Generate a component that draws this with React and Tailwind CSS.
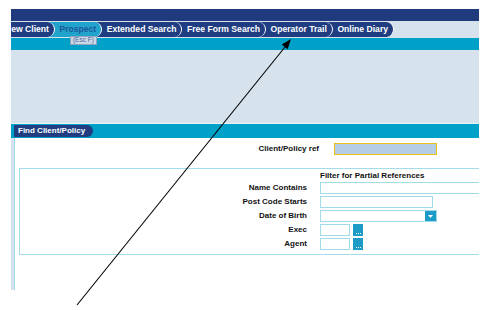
import React from 'react';

const tabs = [
  { label: 'New Client' },
  { label: 'Prospect', active: true },
  { label: 'Extended Search' },
  { label: 'Free Form Search' },
  { label: 'Operator Trail' },
  { label: 'Online Diary' },
];

const zs = ['z-[7]', 'z-[6]', 'z-[5]', 'z-[4]', 'z-[3]', 'z-[2]'];

function Tab({ label, active, index }) {
  const first = index === 0;
  return (
    <div
      className={`relative ${zs[index]} flex items-center h-[15px] rounded-r-full border-r-[1.5px] border-white pr-[5px] font-bold text-[8.6px] leading-none whitespace-nowrap ${
        first ? '-ml-[12px] pl-[6px]' : '-ml-[8px] pl-[12.5px]'
      } ${active ? 'bg-[#22a3cc] text-[#1c5898]' : 'bg-[#203d82] text-white'}`}
    >
      {label}
      {active && (
        <div className="absolute left-[23px] top-[14px] h-[9px] px-[2px] flex items-center bg-[#c9d7e6] border border-[#8ea4bc] text-[6.5px] text-[#4a6898] font-normal leading-none">
          (Esc F)
        </div>
      )}
    </div>
  );
}

function Field({ label, children }) {
  return (
    <div className="flex items-center h-[12px] mb-[2px]">
      <div className="w-[287px] text-right font-bold text-[8px] text-[#111] leading-none whitespace-nowrap">{label}</div>
      <div className="ml-[13px] flex items-center">{children}</div>
    </div>
  );
}

function DotsButton() {
  return (
    <div className="ml-[3px] w-[10px] h-[12px] bg-[#1b9bc6] flex items-end justify-center pb-[2px] gap-[1px]">
      <div className="w-[1px] h-[1px] bg-white" />
      <div className="w-[1px] h-[1px] bg-white" />
      <div className="w-[1px] h-[1px] bg-white" />
    </div>
  );
}

export default function App() {
  return (
    <div className="relative w-[490px] h-[310px] bg-white" style={{ fontFamily: '"Liberation Sans", Arial, sans-serif' }}>
      <div className="absolute left-[11px] top-[9px] w-[468px] h-[281px] overflow-hidden flex flex-col">
        {/* top navy bar */}
        <div className="h-[12px] bg-[#1f3b7d] shrink-0" />
        {/* tab strip */}
        <div className="relative z-10 h-[17px] bg-[#d6e3ec] flex items-center shrink-0">
          {tabs.map((t, i) => (
            <Tab key={t.label} index={i} {...t} />
          ))}
        </div>
        <div className="h-[12px] bg-[#00a1c8] shrink-0" />
        <div className="h-[73px] bg-[#d6e3ec] shrink-0" />

        {/* section header */}
        <div className="h-[15px] bg-[#00a1c8] border-t border-[#eaf2f6] flex items-center shrink-0">
          <div className="ml-[3px] h-[12px] pl-[4px] pr-[8px] flex items-center bg-[#1f3d80] rounded-r-full text-white font-bold text-[8px] leading-none whitespace-nowrap">
            Find Client/Policy
          </div>
        </div>

        {/* panel */}
        <div className="flex-1 bg-[#d6e3ec] pl-[3px] flex">
          <div className="flex-1 bg-white border-l border-[#a3dcea] pt-[5px]">
            <div className="flex items-center h-[12px]">
              <div className="w-[304px] text-right font-bold text-[8px] text-[#111] leading-none whitespace-nowrap">Client/Policy ref</div>
              <div className="ml-[15px] w-[103px] h-[12px] bg-[#b6cde6] border-[1.5px] border-[#efbf1a]" />
            </div>

            <div className="mt-[13px] ml-[4px] border border-r-0 border-[#a3dcea] pb-[2px]">
              <div className="h-[13px] flex items-center pl-[300px] font-bold text-[8px] text-[#111] leading-none whitespace-nowrap">
                Filter for Partial References
              </div>
              <Field label="Name Contains">
                <div className="w-[170px] h-[12px] border border-[#9fdbe9] bg-white" />
              </Field>
              <Field label="Post Code Starts">
                <div className="w-[113px] h-[12px] border border-[#9fdbe9] bg-white" />
              </Field>
              <Field label="Date of Birth">
                <div className="w-[117px] h-[12px] border border-[#9fdbe9] bg-white flex justify-end">
                  <div className="w-[11px] h-full bg-[#1b9bc6] flex items-center justify-center">
                    <svg width="5" height="3" viewBox="0 0 5 3">
                      <path d="M0 0h5L2.5 3z" fill="#ffffff" />
                    </svg>
                  </div>
                </div>
              </Field>
              <Field label="Exec">
                <div className="w-[30px] h-[12px] border border-[#9fdbe9] bg-white" />
                <DotsButton />
              </Field>
              <Field label="Agent">
                <div className="w-[30px] h-[12px] border border-[#9fdbe9] bg-white" />
                <DotsButton />
              </Field>
            </div>
          </div>
        </div>
      </div>

      {/* annotation arrow */}
      <svg className="absolute left-0 top-0 pointer-events-none" width="490" height="310" viewBox="0 0 490 310">
        <line x1="77" y1="305" x2="285" y2="47" stroke="#000" strokeWidth="1.1" />
        <polygon points="291,39 287.6,49.2 281.8,44.5" fill="#000" />
      </svg>
    </div>
  );
}
